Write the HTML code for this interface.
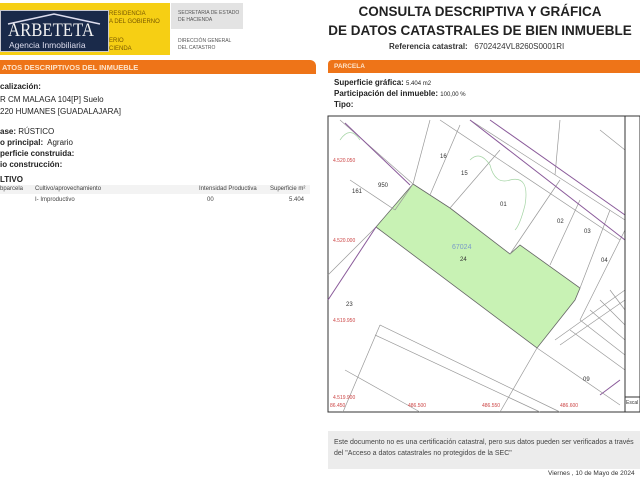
<!DOCTYPE html>
<html><head><meta charset="utf-8"><style>
*{margin:0;padding:0;box-sizing:border-box}
body{width:640px;height:480px;background:#fff;position:relative;overflow:hidden;font-family:"Liberation Sans",sans-serif;color:#222}
.a{position:absolute;white-space:nowrap}
.b{font-weight:bold}
.s{font-size:7px}
.t{font-size:8px}
</style></head><body>
<div class="a" style="left:0;top:3px;width:170px;height:52px;background:#f6cf14"></div>
<div class="a" style="left:171px;top:3px;width:72px;height:26px;background:#e3e3e3"></div>
<div class="a s" style="left:178px;top:10px;font-size:5px;color:#555;line-height:7px">SECRETARIA DE ESTADO<br>DE HACIENDA</div>
<div class="a s" style="left:178px;top:38px;font-size:5px;color:#555;line-height:7px">DIRECCIÓN GENERAL<br>DEL CATASTRO</div>
<div class="a" style="left:109px;top:10px;font-size:6px;color:#7a5a00;line-height:8px">RESIDENCIA<br>A DEL GOBIERNO</div>
<div class="a" style="left:109px;top:37px;font-size:6px;color:#7a5a00;line-height:8px">ERIO<br>CIENDA</div>
<div class="a" style="left:0;top:10px;width:109px;height:42px;background:#1a2a4a;border:1px solid #c9c9d0"></div>
<svg class="a" style="left:0;top:12px" width="109" height="14"><polyline points="8,12 54,2 100,12" fill="none" stroke="#dde" stroke-width="1.5"/></svg>
<div class="a" style="left:8px;top:20px;font-family:'Liberation Serif',serif;font-size:19px;color:#f0f0f0;transform:scaleX(0.88);transform-origin:left top">ARBETETA</div>
<div class="a" style="left:9px;top:40px;font-size:8.5px;color:#dde">Agencia Inmobiliaria</div>
<div class="a" style="left:0;top:60px;width:316px;height:14px;background:#ee7418;border-radius:0 6px 0 0"></div>
<div class="a b" style="left:2px;top:63px;font-size:7.5px;color:#fde4cc">ATOS DESCRIPTIVOS DEL INMUEBLE</div>
<div class="a b t" style="left:0;top:82px">calización:</div>
<div class="a t" style="left:0;top:95px">R CM MALAGA 104[P] Suelo</div>
<div class="a t" style="left:0;top:107px">220 HUMANES [GUADALAJARA]</div>
<div class="a t" style="left:0;top:127px"><b>ase:</b> RÚSTICO</div>
<div class="a t" style="left:0;top:138px"><b>o principal:</b>&nbsp; Agrario</div>
<div class="a b t" style="left:0;top:149px">perficie construida:</div>
<div class="a b t" style="left:0;top:160px">io construcción:</div>
<div class="a b t" style="left:0;top:175px">LTIVO</div>
<div class="a" style="left:0;top:185px;width:310px;height:9px;background:#f3f3f3"></div>
<div class="a s" style="left:0;top:186px;font-size:6px;color:#444">bparcela</div>
<div class="a s" style="left:35px;top:186px;font-size:6px;color:#444">Cultivo/aprovechamiento</div>
<div class="a s" style="left:199px;top:186px;font-size:6px;color:#444">Intensidad Productiva</div>
<div class="a s" style="left:270px;top:186px;font-size:6px;color:#444">Superficie m²</div>
<div class="a s" style="left:35px;top:197px;font-size:6px;color:#444">I- Improductivo</div>
<div class="a s" style="left:207px;top:197px;font-size:6px;color:#444">00</div>
<div class="a s" style="left:289px;top:197px;font-size:6px;color:#444">5.404</div>

<div class="a b" style="left:320px;top:2px;width:320px;text-align:center;font-size:13.5px;line-height:19px;color:#222">CONSULTA DESCRIPTIVA Y GRÁFICA<br>DE DATOS CATASTRALES DE BIEN INMUEBLE</div>
<div class="a" style="left:389px;top:42px;font-size:8px;color:#333"><b>Referencia catastral:</b>&nbsp;&nbsp; 6702424VL8260S0001RI</div>
<div class="a" style="left:328px;top:60px;width:312px;height:13px;background:#ee7418;border-radius:4px 0 0 0"></div>
<div class="a b" style="left:334px;top:63px;font-size:6.5px;color:#fde4cc">PARCELA</div>
<div class="a t" style="left:334px;top:78px"><b>Superficie gráfica:</b> <span style="font-size:6px">5.404 m2</span></div>
<div class="a t" style="left:334px;top:89px"><b>Participación del inmueble:</b> <span style="font-size:6px">100,00 %</span></div>
<div class="a b t" style="left:334px;top:100px">Tipo:</div>

<svg class="a" style="left:327px;top:115px" width="313" height="298" viewBox="327 115 313 298">
<rect x="328" y="116" width="312" height="296" fill="#fff" stroke="#333" stroke-width="1"/>
<polygon points="413,184 450,208 510,254 520,245 580,288 575,300 537,348 376,227" fill="#c8f2b4" stroke="#666" stroke-width="0.8"/>
<g stroke="#999" stroke-width="0.7" fill="none">
<line x1="340" y1="120" x2="413" y2="184"/><line x1="350" y1="180" x2="395" y2="210"/>
<line x1="395" y1="210" x2="413" y2="184"/><line x1="430" y1="120" x2="413" y2="184"/>
<line x1="460" y1="125" x2="430" y2="195"/><line x1="500" y1="150" x2="450" y2="208"/>
<line x1="560" y1="180" x2="510" y2="254"/><line x1="580" y1="200" x2="550" y2="265"/>
<line x1="610" y1="210" x2="580" y2="288"/><line x1="625" y1="230" x2="580" y2="320"/>
<line x1="440" y1="120" x2="620" y2="240"/><line x1="470" y1="120" x2="625" y2="220"/>
<line x1="376" y1="227" x2="328" y2="275"/><line x1="537" y1="348" x2="500" y2="412"/>
<line x1="380" y1="325" x2="560" y2="412"/><line x1="375" y1="335" x2="540" y2="412"/>
<line x1="380" y1="325" x2="343" y2="412"/><line x1="345" y1="370" x2="420" y2="412"/>
<line x1="537" y1="348" x2="620" y2="405"/><line x1="570" y1="330" x2="625" y2="370"/>
<line x1="580" y1="320" x2="625" y2="355"/><line x1="590" y1="310" x2="625" y2="340"/>
<line x1="600" y1="300" x2="625" y2="325"/><line x1="610" y1="290" x2="625" y2="310"/>
<line x1="560" y1="345" x2="625" y2="300"/><line x1="555" y1="340" x2="625" y2="290"/>
<line x1="555" y1="175" x2="560" y2="120"/><line x1="600" y1="130" x2="625" y2="150"/>
</g>
<g stroke="#a4d4a4" stroke-width="0.7" fill="none">
<path d="M340,140 q10,-15 20,0 M470,160 q10,-10 20,5 q5,20 20,15 q20,-5 15,25 q-5,20 -10,25"/>
</g>
<g stroke="#8a5a9a" stroke-width="1" fill="none">
<line x1="328" y1="300" x2="376" y2="227"/><line x1="345" y1="123" x2="410" y2="185"/>
<line x1="470" y1="120" x2="625" y2="240"/><line x1="490" y1="120" x2="625" y2="215"/>
<line x1="600" y1="395" x2="620" y2="380"/>
</g>
<line x1="625" y1="116" x2="625" y2="412" stroke="#333"/>
<line x1="625" y1="397" x2="640" y2="397" stroke="#333"/>
<g font-family="Liberation Sans" font-size="5" fill="#c44">
<text x="333" y="162">4.520.050</text><text x="333" y="242">4.520.000</text>
<text x="333" y="322">4.519.950</text><text x="333" y="399">4.519.900</text>
<text x="330" y="407">86.450</text><text x="408" y="407">486.500</text>
<text x="482" y="407">486.550</text><text x="560" y="407">486.600</text>
</g>
<g font-family="Liberation Sans" font-size="6" fill="#333">
<text x="440" y="158">16</text><text x="461" y="175">15</text><text x="378" y="187">950</text>
<text x="352" y="193">161</text><text x="500" y="206">01</text><text x="557" y="223">02</text>
<text x="584" y="233">03</text><text x="601" y="262">04</text><text x="460" y="261">24</text>
<text x="346" y="306">23</text><text x="583" y="381">09</text>
</g>
<text x="452" y="249" font-family="Liberation Sans" font-size="7" fill="#7a9ac8">67024</text>
<text x="626" y="404" font-family="Liberation Sans" font-size="5" fill="#333">Escal</text>
</svg>

<div class="a" style="left:328px;top:431px;width:312px;height:38px;background:#ececec"></div>
<div class="a" style="left:334px;top:437px;font-size:7px;line-height:11px;color:#444;white-space:normal;width:305px">Este documento no es una certificación catastral, pero sus datos pueden ser verificados a través del "Acceso a datos catastrales no protegidos de la SEC"</div>
<div class="a" style="left:548px;top:470px;font-size:6.5px;color:#333">Viernes , 10 de Mayo de 2024</div>
</body></html>
